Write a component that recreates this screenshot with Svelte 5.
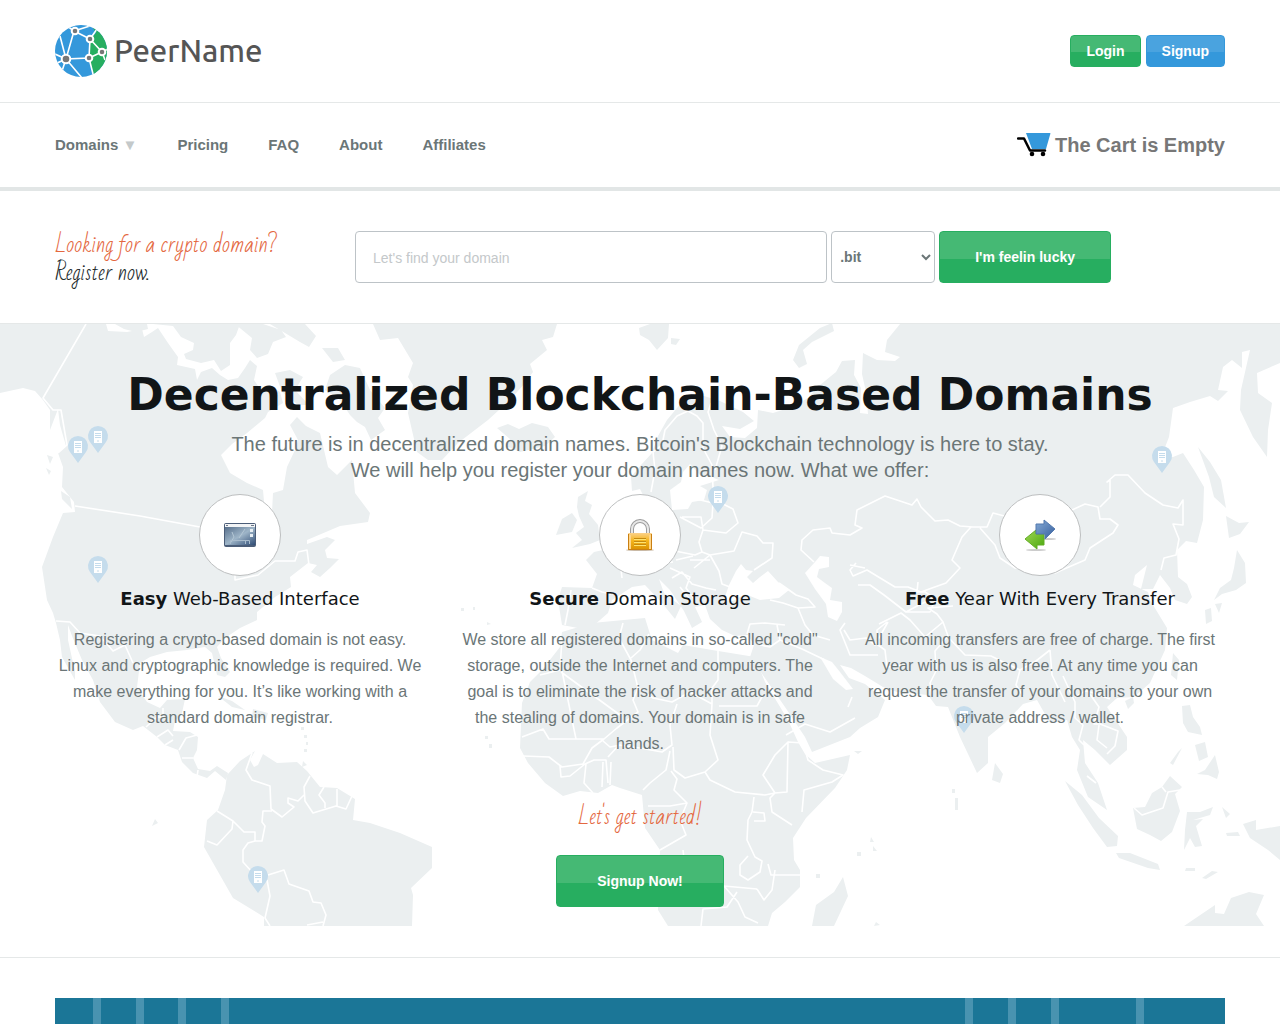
<script lang="ts">
	const navLinks = ["Pricing", "FAQ", "About", "Affiliates"];

	const features = [
		{
			icon: "window",
			strong: "Easy",
			title: "Web-Based Interface",
			text: "Registering a crypto-based domain is not easy. Linux and cryptographic knowledge is required. We make everything for you. It’s like working with a standard domain registrar."
		},
		{
			icon: "lock",
			strong: "Secure",
			title: "Domain Storage",
			text: 'We store all registered domains in so-called "cold" storage, outside the Internet and computers. The goal is to eliminate the risk of hacker attacks and the stealing of domains. Your domain is in safe hands.'
		},
		{
			icon: "arrows",
			strong: "Free",
			title: "Year With Every Transfer",
			text: "All incoming transfers are free of charge. The first year with us is also free. At any time you can request the transfer of your domains to your own private address / wallet."
		}
	];

	// server pins on the map
	const pins = [
		[78, 463], [98, 453], [98, 583], [718, 513], [1162, 473], [964, 733], [258, 893]
	];

	const bars = [38, 81, 123, 166, 910, 953, 996, 1081];

	let query = $state("");
	let zone = $state(".bit");
</script>

<header class="top">
	<div class="container row">
		<a class="logo" href="/">
			<svg width="53" height="53" viewBox="0 0 53 53" aria-hidden="true">
				<defs>
					<clipPath id="globe"><circle cx="26" cy="26" r="26" /></clipPath>
				</defs>
				<g clip-path="url(#globe)">
					<rect width="53" height="53" fill="#3498db" />
					<path d="M36 0L41 8L35 14L34 33L40 53H53V0Z" fill="#27ae60" />
					<path d="M5 11L11 34L19 6L35 14L34 33L11 34L27 53M19 6L11 0M19 6L38 0M35 14L47 27L34 33L39 53M35 14L42 4M47 27L53 24M47 27L50 35M11 34L0 29M11 34L0 39M11 34L7 46" fill="none" stroke="#fff" stroke-width="1.600" />
				</g>
				<g fill="#777" stroke="#fff" stroke-width="2">
					<circle cx="20" cy="6" r="3.300" />
					<circle cx="35" cy="14" r="3.300" />
					<circle cx="47" cy="27" r="3.300" />
					<circle cx="34" cy="33" r="3.300" />
					<circle cx="11" cy="34" r="4.300" />
				</g>
			</svg>
			<span>PeerName</span>
		</a>
		<div class="account">
			<button class="btn small green">Login</button>
			<button class="btn small blue">Signup</button>
		</div>
	</div>
</header>

<nav class="menu">
	<div class="container row">
		<ul>
			<li><a href="#domains">Domains <span class="caret">▼</span></a></li>
			{#each navLinks as link}
				<li><a href="#{link.toLowerCase()}">{link}</a></li>
			{/each}
		</ul>
		<a class="cart" href="#cart">
			<svg width="34" height="24" viewBox="0 0 34 24" aria-hidden="true">
				<path d="M9 0H33Q34 0 33 2L29 16H15Z" fill="#3498db" />
				<path d="M1 5.500H7L13 17.500H28" fill="none" stroke="#000" stroke-width="2.500" stroke-linecap="round" stroke-linejoin="round" />
				<circle cx="15" cy="21" r="2.300" />
				<circle cx="26" cy="21" r="2.300" />
			</svg>
			The Cart is Empty
		</a>
	</div>
</nav>

<section class="search">
	<div class="container finder">
		<p class="script">
			<span class="orange">Looking for a crypto domain?</span>
			<span>Register now.</span>
		</p>
		<form onsubmit={(e) => e.preventDefault()}>
			<input type="text" aria-label="Domain name" placeholder="Let's find your domain" bind:value={query} />
			<select aria-label="Domain zone" bind:value={zone}>
				<option>.bit</option>
				<option>.coin</option>
				<option>.emc</option>
			</select>
			<button class="btn large green">I'm feelin lucky</button>
		</form>
	</div>
</section>

<section class="hero">
	<svg class="map" viewBox="0 324 1280 602" preserveAspectRatio="xMidYMin slice" aria-hidden="true">
		<g fill="#ebeff0">
			<!-- north and central america -->
			<path d="M0 324H106L108 331L127 332L142 329L144 337L152 332L158 328L168 343L178 357L177 365L195 369L197 380L201 372L212 368L220 375L228 380L238 378L245 368L250 360L257 366L254 380L262 392L270 385L280 392L283 403L268 412L265 418L247 433L232 444L221 455L230 473L247 483L263 490L265 513H272L273 493L283 490L287 467L295 450L298 440L290 425L297 417L306 426L320 433L328 467L337 475L352 460L355 493L370 513L368 522L340 526L307 540V544L327 537L335 540L325 550L327 558L339 559L330 568L320 577L311 572L317 565L308 563L290 577L291 587L275 597L257 612V620L240 628L225 638L217 647L221 658L230 672L225 677L217 675L212 653L205 647L187 650L167 652L150 657L140 663L137 687L147 702L160 708L167 700L185 699L182 713L175 721L173 731L190 732L198 737L197 750L193 758L198 769L210 771L217 766L228 773L226 780L215 771L207 778L193 773L182 762L178 750L165 745L157 737L143 726L133 730L115 722L100 702L93 680L82 660L72 636L68 625V640L75 672V680L62 657L60 640L56 623L53 613L47 600L42 567L53 537L63 513L75 512L74 502L62 487L63 467L58 453L66 446L60 425L58 409L50 430V410L43 400L35 391L23 388L0 393Z" />
			<!-- arctic islands -->
			<path d="M115 324H147L148 329L136 332L124 329ZM153 324H240L236 335L230 343L230 365L221 371L214 360L201 363L186 359L184 354L193 350L194 343L181 337L173 326ZM235 324H263L281 330L286 337L273 342L268 354L257 358L250 350L252 338ZM270 324H305L316 336L309 347L300 342ZM322 348L338 348L345 360L333 362ZM345 365L360 368L370 390L385 408L378 418L385 430L371 440L365 427L357 422L350 415L340 400L325 390L330 375ZM275 373L290 370L303 377L295 390L309 405L298 405L282 392ZM47 455L53 457L50 464ZM46 468L51 471L49 475ZM61 491L70 497L72 509L62 499Z" />
			<!-- greenland and iceland -->
			<path d="M373 324H557L553 337L542 340L547 350L530 364L533 372L525 383L510 400L488 420L458 443L442 460L428 460L417 452L408 413L413 385L408 377L413 363L398 338L380 340ZM497 428L508 424L519 429L532 423L548 427L555 437L545 446L520 452L506 446L510 439Z" />
			<!-- south america -->
			<path d="M255 751L250 760L254 767L258 765L263 754L277 763L297 762L307 771L320 787L337 788L355 799L353 820L370 823L400 833L432 847V868L411 888L413 895L412 926H264V917L233 898L204 847L207 820L218 810L225 790L227 775L240 761ZM155 819L158 823L152 826Z" />
			<!-- svalbard and novaya zemlya -->
			<path d="M639 328L650 324H669L668 338L657 350L649 340L640 335ZM671 338L680 339L676 345L671 344ZM793 360L799 345L820 328L832 323L834 331L812 342L803 350L807 364L799 368Z" />
			<!-- british isles -->
			<path d="M578 497L588 491L585 501L592 505L589 514L598 525L600 540L590 544L572 548L582 540L576 533L584 527L579 516L577 507ZM562 519L572 513L577 520L572 532L556 535Z" />
			<!-- eurasia -->
			<path d="M632 491L631 477L641 465L652 453L658 436L667 420L682 402L704 396L720 401L743 412L754 421L740 429L722 426L730 437L745 438L757 428L758 410L773 413L792 407L808 398L820 385L836 372L842 361L855 360L854 375L861 388L860 413L868 414L866 392L862 374L863 353L877 360L895 361L900 357L885 352L887 340L900 324H1280V363L1257 373L1258 393L1272 403L1268 430L1267 457L1253 437L1240 410L1241 390L1250 350L1242 352V368L1232 360L1223 367L1218 390L1228 391L1218 401L1210 396L1190 402L1173 408L1169 437L1162 455L1173 457L1183 453L1194 470L1204 487L1203 520L1197 543L1186 541L1177 550L1178 577L1187 584L1192 597L1187 604L1175 600L1170 588L1160 575L1153 589L1141 589L1147 565L1135 575L1133 585L1148 592L1150 600L1167 628L1165 650L1150 683L1134 697L1117 698L1107 707L1127 737V750L1110 765L1095 750L1083 740L1085 763L1098 783L1107 810L1088 797L1077 770L1080 750L1072 737L1067 720L1050 723L1037 700L1023 704L1005 723L988 737V763L977 773L960 737L948 707L936 706L928 695L897 692L883 687L865 676L851 668L840 665L849 678L865 684L885 700L878 717L860 728L850 737L812 752L805 737L785 707L758 668L750 657L754 645L748 635L735 636L722 630L710 619L705 605L695 607L702 622L692 628L684 611L670 590L659 579L664 593L681 606L675 619L662 603L645 585L632 587L612 600L608 613L592 627L578 628L562 625L558 600L562 587L592 588L597 574L586 560L594 552L603 550L617 540L635 525L638 505L644 497L640 489Z" />
			<!-- japan, philippines and indonesia -->
			<path d="M1198 447L1210 462L1221 480L1226 508L1214 497L1209 477ZM1226 516L1239 523L1249 522L1240 534L1229 538ZM1237 550L1245 563L1246 583L1236 590L1222 594L1214 600L1220 588L1231 580L1234 568ZM1205 610L1211 608L1212 621L1206 624ZM1215 604L1222 603L1219 613ZM1173 653L1179 660L1177 680L1171 675ZM1125 701L1133 697L1134 703L1128 709ZM1182 706L1190 705L1193 717L1200 727L1202 735L1188 732L1183 723ZM1182 748L1173 765L1170 763L1178 752ZM1195 745L1205 742L1208 757L1199 761ZM1205 770L1215 755L1219 772L1217 779L1208 775L1197 774ZM995 763L1003 774L1000 783L992 780ZM1065 781L1082 795L1099 818L1118 836L1117 846L1107 847L1093 828L1078 805ZM1116 853L1130 853L1158 864L1160 870L1148 868L1119 858ZM1170 776L1182 787L1175 794L1180 811L1172 832L1161 841L1150 835L1137 829L1133 808L1145 807L1152 793L1162 787ZM1187 812L1200 812L1213 807L1210 815L1193 820L1203 819L1196 826L1202 846L1195 847L1190 838L1184 850L1185 830ZM1222 807L1230 814L1226 818ZM1226 833L1238 832L1240 836L1227 836ZM1243 824L1256 820L1256 830L1280 826V860L1268 850L1250 838ZM1186 868H1195V871H1185ZM1202 878L1212 871L1218 872L1206 879ZM1184 926L1215 905V913L1224 914L1231 898L1249 892L1264 895L1256 914L1264 926Z" />
			<!-- africa and madagascar -->
			<path d="M562 632L592 623L645 618L650 634L652 640L678 653L683 645L712 650L755 657L765 682L788 720L798 742L805 754L815 763L850 755L847 770L835 788L806 818L793 838L794 860L800 870V887L785 902L772 913L768 926H668L658 910L660 850L645 828L642 795L620 788L612 785L598 793L580 791L563 796L545 783L528 763L520 748L522 703L530 682L542 670L560 647ZM843 877L848 896L834 926H812L816 905L834 892Z" />
			<!-- caribbean and small islands -->
			<path d="M218 696L232 701L245 710L232 707ZM253 709L268 713L266 720L252 717ZM301 727H304V730H301ZM304 735H307V738H304ZM306 742H308V745H306ZM304 749H307V752H304ZM303 761L307 765L302 767ZM461 608H464V611H461ZM473 607H475V610H473ZM487 622L491 624L487 625ZM485 736H488V739H485ZM489 744H492V748H489ZM854 751L862 751L858 754ZM952 789H955V793H952ZM955 798H958V810H955ZM871 837L874 842H870ZM873 846L877 851H873ZM857 852H861V856H857ZM876 922L880 925L874 926ZM816 874H820V878H816Z" />
		</g>
		<g fill="#fff">
			<!-- inland seas -->
			<path d="M672 510L670 490L681 482L683 472L690 464L700 475L709 476L719 480L700 486L707 490L704 500L692 502L688 509Z" />
			<path d="M724 600L729 585L736 571L741 564L746 570L753 571L747 577L753 583L760 577L768 571L778 582L789 590L779 598L760 600L745 594L733 601Z" />
			<path d="M805 573L815 562L820 556L829 557V567L819 569L817 577L825 583L832 588L830 600L842 602V612L837 621L828 617L826 604L815 589Z" />
			<path d="M820 657L832 662L840 672L853 689L846 690L833 679Z" />
		</g>
		<!-- borders -->
		<g fill="none" stroke="#fff" stroke-width="1.600" stroke-linejoin="round">
			<path d="M86 324L43 398L53 410H61L67 445L58 453M75 506L140 516L200 527L235 572V580L258 575L275 561H295L298 552L307 550L309 565M56 621L70 622L80 633L100 636L113 651L125 645L133 663M157 737L168 730L173 736M165 745L173 740M179 750L186 738L197 735M182 758H193M198 770L197 777M146 727L157 717H163V708" />
			<path d="M252 753L246 770L252 780L270 786L271 809L282 817L294 807L288 803V798L298 801L304 795M310 776L304 787L305 801L313 813L336 806L346 809L352 796M324 787L319 795L325 803V808M337 789V806M217 811L233 821L232 829L217 845L207 841M233 821L244 832H255V841L248 843L243 850V862L253 873M255 841H262L265 826L262 822L263 811H272M268 875L284 870L289 884L309 891L313 902L321 903L326 915L323 926M267 880L270 896L265 918L270 926M307 925L323 922" />
			<path d="M651 492L655 470L653 452L662 445L665 430L677 416L688 411L697 416L703 423V448L712 465L713 487L719 508M711 403L708 412L714 430L722 446L715 470M682 504L696 499L713 503L712 518L701 528L680 517M682 517H701L703 530L726 533L738 523L733 509L723 504M703 530L699 542L702 552L710 555L734 551L742 532L757 536L763 543H773L772 558L754 570M675 551L695 555L702 552M694 568L710 555L719 571L722 584L730 587M676 560L693 556M670 568L690 577L686 588L695 600M672 578L682 572L692 584L706 588L716 590M659 563L673 562M640 555L635 545M605 548L620 560L622 578M571 590L568 610L565 625M592 588L602 592L611 594M680 587L691 601M690 560H710" />
			<path d="M856 563L850 570L853 576L867 570L895 587H908L921 592L932 588L946 583L960 568L952 560L962 537L971 527L987 527L993 513L1008 517M973 527L960 526L948 520L935 521L921 507L917 499L912 505L885 496L857 510L855 525L862 528L850 535L832 533L830 528L813 530L802 540L801 550L814 562M980 528L995 545L1000 558L1015 568L1055 573L1085 560L1090 548L1113 533L1118 525L1110 519H1100L1098 507L1085 504L1072 510M1100 507L1110 497V480L1107 482L1115 475H1128L1145 493L1163 505L1178 508L1183 500V525L1173 524L1179 539L1176 555L1164 558L1161 570M858 585L870 585L884 595L906 612L919 605L934 598L925 592H917L918 582M850 565L865 568M879 624L901 613L910 620L925 637L943 622L937 614L928 608L953 606M906 612H930L935 600M888 622L875 645L866 638L850 640L844 630M887 622L877 630L878 645L885 650L887 667L906 665M845 623L840 630L850 655L878 655M943 622L948 636L935 651L936 671L930 683L932 694M947 636L965 655L991 656L1020 670L1036 661L1050 650M1020 670L1016 685L1023 696M1050 650L1052 675L1065 702M1063 676L1075 702V718L1083 725L1079 740L1084 745M1075 697L1087 690L1099 707L1094 724H1100L1118 731L1115 746L1107 754M1099 725L1097 740L1107 748M1085 690L1110 699M1087 776L1096 783M1134 808L1142 815L1163 808L1168 792L1180 790M1162 787L1166 792" />
			<path d="M779 583L796 595L808 599L815 607L798 608L783 603L770 600M798 608L805 625L813 635L830 640M785 625L765 623L750 624L747 634M777 625L780 640L770 647L760 645M780 640L802 649L825 660M786 735L805 724L830 732L855 718M852 697L848 707" />
			<path d="M623 623L619 638L631 660L638 688L653 698L672 702L690 692L712 704V688L718 680V651M719 706H757L763 695M649 634L640 650L631 658M562 638L560 670L540 675M562 671L576 739H549L543 729L522 737M576 739H604L617 728L638 712L633 700L638 688M561 672L620 715M604 739L592 748L583 764L562 767L549 757L523 756M603 741L610 747L621 745M560 766L561 777L570 776L585 764L594 760H606L608 783M586 764L584 783L593 793M603 762L602 787M611 762L610 785M608 757L619 745L640 748L662 752L672 745L670 725L677 704M670 751L666 770L650 783L643 790M673 747L674 770L685 778L705 772L710 780L735 792M671 771L677 779L674 790L687 803L670 806L648 806M712 704L710 735L718 760L705 772M735 792L765 795L775 793L787 792L788 742L775 755L763 775L775 793L770 798L772 812L792 825M788 742L803 743L808 760L823 770L843 775L832 782L804 790L802 812M754 797L752 812L748 820L747 840L755 857L762 861L760 872L748 880L740 875V865L748 856M754 821H765L764 813L753 812M687 803L680 820L686 835L660 850M683 850L686 876L695 882L716 880L724 886L757 889M768 864L771 875H800M757 889L764 900L772 890L775 870M724 886L738 902L745 917L758 923M701 926L703 909L727 907L737 892" />
		</g>
		{#each pins as [x, y]}
			<g transform="translate({x} {y})">
				<path d="M0 0L-8 -11A10 10 0 1 1 8 -11Z" fill="#c5dcec" />
				<rect x="-4" y="-22" width="8" height="12" fill="#fff" />
				<path d="M-3 -19.500H3M-3 -17.500H3M-3 -15.500H3M-1 -12H1" stroke="#c5dcec" />
			</g>
		{/each}
	</svg>

	<div class="container content">
		<h1>Decentralized Blockchain-Based Domains</h1>
		<p class="lead">
			The future is in decentralized domain names. Bitcoin's Blockchain technology is here to stay.<br />
			We will help you register your domain names now. What we offer:
		</p>

		<div class="features">
			{#each features as feature}
				<article>
					<div class="circle">
						{#if feature.icon === "window"}
							<svg width="32" height="32" viewBox="0 0 32 32" aria-hidden="true">
								<defs>
									<linearGradient id="glass" x1="0" y1="0" x2="1" y2="1">
										<stop offset="0" stop-color="#58708c" />
										<stop offset=".5" stop-color="#9eb5c8" />
										<stop offset="1" stop-color="#2f4c75" />
									</linearGradient>
								</defs>
								<rect x="0" y="4" width="32" height="24" rx="2" fill="#4b5d78" />
								<rect x="1" y="8" width="30" height="18" fill="url(#glass)" />
								<path d="M1 5H31V8H1Z" fill="#f2f4f6" />
								<path d="M2 6H4V7H2ZM27 6H30V7H27Z" fill="#6c7888" />
								<path d="M8 13L10 18L7 23M21 10L15 19" fill="none" stroke="#b4c7d5" />
								<path d="M26 10H29V13H26ZM26 15H29V18H26Z" fill="#e7eef3" />
								<path d="M6.500 25V21.500H25.500V25M21.500 21V25" fill="none" stroke="#a9bccd" />
							</svg>
						{:else if feature.icon === "lock"}
							<svg width="32" height="32" viewBox="0 0 32 32" aria-hidden="true">
								<defs>
									<linearGradient id="brass" x1="0" y1="0" x2="0" y2="1">
										<stop offset="0" stop-color="#fbd18a" />
										<stop offset=".45" stop-color="#f5b51d" />
										<stop offset="1" stop-color="#d98f00" />
									</linearGradient>
								</defs>
								<ellipse cx="16" cy="31" rx="14" ry="1" fill="#c9b9a5" />
								<path d="M8 17V10A8 8 0 0 1 24 10V17" fill="none" stroke="#9c9c9c" stroke-width="4" />
								<path d="M8 17V10A8 8 0 0 1 24 10V17" fill="none" stroke="#e8e8e8" stroke-width="2" />
								<rect x="4" y="14" width="24" height="17" rx="1" fill="url(#brass)" />
								<path d="M4.500 15V30.500H27.500V15" fill="none" stroke="#c97f13" />
								<path d="M6 16V30M26 16V30" stroke="#ffd68a" stroke-width="2" />
								<path d="M10 19.500H22M10 22.500H22M10 25.500H22" stroke="#c58a10" />
								<path d="M10 20.500H22M10 23.500H22M10 26.500H22" stroke="#ffe371" />
							</svg>
						{:else}
							<svg width="32" height="32" viewBox="0 0 32 32" aria-hidden="true">
								<defs>
									<linearGradient id="leaf" x1="0" y1="0" x2="1" y2="1">
										<stop offset="0" stop-color="#a1d655" />
										<stop offset="1" stop-color="#49a80e" />
									</linearGradient>
									<linearGradient id="sea" x1="0" y1="0" x2="1" y2="1">
										<stop offset="0" stop-color="#84aad6" />
										<stop offset="1" stop-color="#365e9d" />
									</linearGradient>
								</defs>
								<ellipse cx="24" cy="20" rx="8" ry="1" fill="#ccc" />
								<ellipse cx="12" cy="31" rx="10" ry="1" fill="#ccc" />
								<path d="M1 20L12 11V15H20V26H13V30Z" fill="url(#leaf)" stroke="#62ad25" />
								<path d="M12 5H20V1L31 10L21 20V15H12Z" fill="url(#sea)" stroke="#5379ae" />
							</svg>
						{/if}
					</div>
					<h2><strong>{feature.strong}</strong> {feature.title}</h2>
					<p>{feature.text}</p>
				</article>
			{/each}
		</div>

		<p class="script orange start">Let's get started!</p>
		<button class="btn large wide green">Signup Now!</button>
	</div>
</section>

<section class="promo">
	<div class="container">
		<div class="banner">
			<svg width="100%" height="100%" aria-hidden="true">
				{#each bars as x}
					<rect {x} y="0" width="8" height="100%" fill="#4993b0" />
				{/each}
			</svg>
		</div>
	</div>
</section>

<style>
	:global(body) {
		margin: 0;
		background: #fff;
		color: #6b7677;
		font-family: "Helvetica Neue", Helvetica, "Liberation Sans", Arial, sans-serif;
		font-size: 16px;
		overflow: hidden;
	}

	.container {
		box-sizing: border-box;
		width: 100%;
		max-width: 1170px;
		margin: 0 auto;
	}

	.row {
		display: flex;
		align-items: center;
		justify-content: space-between;
	}

	.top {
		padding: 24px 0;
		border-bottom: 1px solid #e5e8e8;
	}

	.top .row {
		height: 54px;
	}

	.logo {
		display: flex;
		align-items: center;
		gap: 6px;
		color: #555;
		font: 500 31px/40px Ubuntu, "Noto Sans", sans-serif;
		text-decoration: none;
	}

	.account {
		display: flex;
		gap: 5px;
	}

	.btn {
		box-sizing: border-box;
		border: 1px solid #27ae60;
		border-radius: 4px;
		color: #fff;
		font-family: inherit;
		font-size: 14px;
		font-weight: bold;
		line-height: 20px;
		cursor: pointer;
	}

	.green {
		background: linear-gradient(#45b974 54%, #27ae60 54%);
	}

	.blue {
		border-color: #3498db;
		background: linear-gradient(#4aa3df 54%, #3498db 54%);
	}

	.small {
		height: 32px;
		padding: 0 15px;
	}

	.large {
		height: 52px;
		padding: 0 35px;
	}

	.wide {
		padding: 0 40px;
	}

	.menu {
		border-bottom: 4px solid #e2e6e6;
	}

	.menu .row {
		height: 84px;
	}

	.menu ul {
		display: flex;
		gap: 40px;
		margin: 0;
		padding: 0;
		list-style: none;
	}

	.menu a {
		color: #6b7677;
		font-size: 15px;
		font-weight: bold;
		line-height: 20px;
		text-decoration: none;
	}

	.caret {
		color: #c4c9ca;
		font-size: 15px;
	}

	.menu .cart {
		display: flex;
		align-items: center;
		gap: 4px;
		color: #777;
		font-size: 20px;
	}

	.search {
		padding: 40px 0;
		border-bottom: 1px solid #e5e8e8;
	}

	.finder {
		display: flex;
		height: 52px;
	}

	.script {
		display: flex;
		flex-direction: column;
		margin: 0;
		color: #222a2c;
		font: 21px/28px "Bad Script", "Liberation Sans Narrow", cursive;
	}

	.finder .script {
		flex: 0 0 300px;
	}

	.orange {
		color: #e4683f;
	}

	form {
		display: flex;
		flex: 0 1 756px;
		gap: 4px;
	}

	input,
	select {
		box-sizing: border-box;
		height: 52px;
		border: 1px solid #bdc3c7;
		border-radius: 4px;
		background: #fff;
		color: #6b7677;
		font-family: inherit;
		font-size: 14px;
	}

	input {
		flex: 1;
		min-width: 0;
		padding: 2px 17px 0;
	}

	input::placeholder {
		color: #c4c8ca;
		opacity: 1;
	}

	select {
		width: 104px;
		padding: 0 4px;
		font-weight: bold;
	}

	.hero {
		position: relative;
		padding: 43px 0 50px;
		border-bottom: 1px solid #e5e8e8;
	}

	/* the map lies behind the text and ends above the section's rule */
	.map {
		position: absolute;
		top: 0;
		left: 0;
		width: 100%;
		height: 602px;
	}

	.content {
		position: relative;
		text-align: center;
	}

	h1 {
		margin: 0;
		color: #111517;
		font: bold 44px/56px "DejaVu Sans", sans-serif;
	}

	.lead {
		margin: 8px 0 11px;
		font-size: 20px;
		line-height: 26px;
	}

	.features {
		display: grid;
		grid-template-columns: repeat(3, 1fr);
		gap: 30px;
	}

	.circle {
		display: flex;
		align-items: center;
		justify-content: center;
		width: 80px;
		height: 80px;
		margin: 0 auto;
		border: 1px solid #bdbfc0;
		border-radius: 50%;
		background: #fff;
	}

	h2 {
		margin: 10px 0 15px;
		color: #111517;
		font: 18px/26px "DejaVu Sans", sans-serif;
	}

	article p {
		margin: 0;
		line-height: 26px;
	}

	.start {
		align-items: center;
		margin: 46px 0 24px;
	}

	.start.orange {
		color: #e4683f;
	}

	.promo {
		padding: 40px 0 0;
	}

	.banner {
		height: 26px;
		background: #1b7697;
	}

	.banner svg {
		display: block;
	}
</style>
